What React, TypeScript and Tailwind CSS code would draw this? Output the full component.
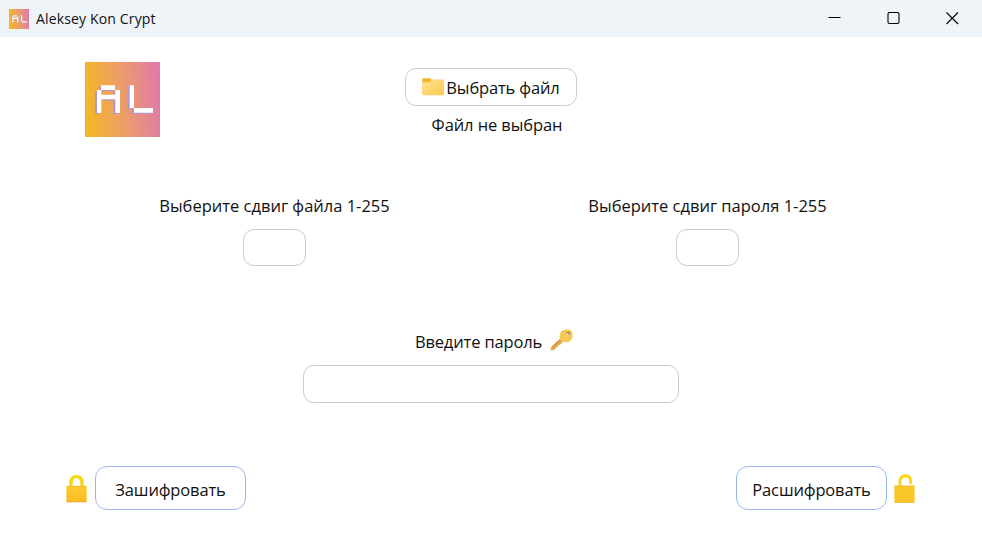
import React from "react";

function Logo({ className }: { className: string }) {
  const letters =
    "M48 70H90V84H105V153H91V112H49V153H36V84H48ZM49 84V98H91V84ZM134 70H147V138H204V152H147V138H134Z";
  return (
    <svg viewBox="0 0 225 225" className={className}>
      <defs>
        <linearGradient id="logoBg" x1="0" y1="0.55" x2="1" y2="0.45">
          <stop offset="0" stopColor="#f5b727" />
          <stop offset="0.12" stopColor="#f2b135" />
          <stop offset="0.55" stopColor="#eb9a70" />
          <stop offset="1" stopColor="#e07ba6" />
        </linearGradient>
      </defs>
      <rect width="225" height="225" fill="url(#logoBg)" />
      <path d={letters} fill="#b295cd" fillRule="evenodd" transform="translate(-6 3)" />
      <path d={letters} fill="#fff" fillRule="evenodd" />
    </svg>
  );
}

function FolderIcon() {
  return (
    <svg viewBox="0 0 66 54" className="h-[18px] w-[22px] shrink-0">
      <defs>
        <linearGradient id="folder" x1="0" y1="0" x2="1" y2="1">
          <stop offset="0" stopColor="#ffe294" />
          <stop offset="1" stopColor="#fccb50" />
        </linearGradient>
      </defs>
      <path d="M1 4Q1 1 4 1H24L29 5H62Q65 5 65 8V50H1Z" fill="#f4b32d" />
      <path d="M1 13H23L29 5H65V49Q65 52 62 52H4Q1 52 1 49Z" fill="url(#folder)" />
    </svg>
  );
}

function KeyIcon() {
  return (
    <svg viewBox="0 0 68 66" className="h-[22px] w-[23px] shrink-0">
      <path d="M31 28L2 55V64H11L14 60L18 59V54L24 53V48L30 47L40 37Z" fill="#e5ac4c" />
      <path d="M32 31L5 57" stroke="#c78235" strokeWidth="3" />
      <path d="M35 5Q45 0 58 2Q66 4 67 12Q68 29 61 35Q52 42 39 38Q29 36 28 25Q28 11 35 5Z" fill="#f7c653" />
      <circle cx="54" cy="13" r="5" fill="#806c49" />
      <circle cx="53" cy="15" r="3" fill="#fff" />
    </svg>
  );
}

function LockIcon({ open }: { open?: boolean }) {
  return (
    <svg viewBox="0 0 63 87" className="h-[29px] w-[21px] shrink-0">
      <defs>
        <linearGradient id="lockBody" x1="0" y1="0" x2="0" y2="1">
          <stop offset="0" stopColor="#fdcd32" />
          <stop offset="0.9" stopColor="#fcbd23" />
          <stop offset="1" stopColor="#ed9b24" />
        </linearGradient>
      </defs>
      {open ? (
        <path d="M18 38V24Q18 5 34 5Q50 5 50 22V30" fill="none" stroke="#f8d817" strokeWidth="9" />
      ) : (
        <path d="M15 40V27Q15 8 31 8Q48 8 48 27V40" fill="none" stroke="#f7d514" strokeWidth="10" />
      )}
      <rect
        x="1"
        y={open ? 35 : 36}
        width="61"
        height={open ? 51 : 49}
        rx="2"
        fill={open ? "#fac72a" : "url(#lockBody)"}
      />
      <path d={open ? "M2 36H61M2 85H61" : "M2 37H61"} stroke="#f4b02a" strokeWidth="2" />
    </svg>
  );
}

function ShiftField({ label, className }: { label: string; className: string }) {
  return (
    <label className={`flex flex-col items-center ${className}`}>
      <span className="h-6 leading-6">{label}</span>
      <input className="mt-[11px] h-[37px] w-[63px] rounded-[11px] border border-[#cbcbcb] bg-white text-center outline-none" />
    </label>
  );
}

export default function App() {
  return (
    <div className="flex h-[553px] w-[982px] flex-col overflow-hidden bg-white font-['Open_Sans','Noto_Sans',sans-serif] text-[16.5px] whitespace-nowrap text-[#111]">
      <header className="flex h-[37px] shrink-0 items-center bg-[#eff4f9] pl-[9px]">
        <Logo className="size-5" />
        <h1 className="ml-[7px] text-sm tracking-[0.15px]">Aleksey Kon Crypt</h1>
        <div className="ml-auto flex items-center gap-[46px] pr-[23px] text-black">
          <svg viewBox="0 0 13 13" className="size-[13px]">
            <path d="M0.5 5.5H12.5" stroke="currentColor" />
          </svg>
          <svg viewBox="0 0 13 13" className="size-[13px]">
            <rect x="1" y="0.5" width="11" height="11" rx="1.5" fill="none" stroke="currentColor" strokeWidth="1.1" />
          </svg>
          <svg viewBox="0 0 13 13" className="size-[13px]">
            <path d="M0.5 0.5L12 12M12 0.5L0.5 12" stroke="currentColor" strokeWidth="1.1" />
          </svg>
        </div>
      </header>
      <main className="flex flex-1 flex-col">
        <section className="flex h-[157px] items-start pt-[25px] pl-[85px]">
          <Logo className="size-[75px]" />
          <div className="mt-[6px] ml-[245px] flex w-[172px] flex-col items-center">
            <button className="flex h-[38px] w-[172px] items-center justify-center rounded-[11px] border border-[#cbcbcb] bg-white pb-px">
              <FolderIcon />
              <span className="mt-[3px] ml-[2px] tracking-[-0.15px]">Выбрать файл</span>
            </button>
            <span className="mt-[7px] ml-[12px] h-6 leading-6 tracking-[-0.1px]">Файл не выбран</span>
          </div>
        </section>
        <section className="flex h-[134px] gap-[194px] pl-[159px]">
          <ShiftField label="Выберите сдвиг файла 1-255" className="w-[231px]" />
          <ShiftField label="Выберите сдвиг пароля 1-255" className="w-[247px]" />
        </section>
        <section className="flex h-[138px] flex-col items-center">
          <label htmlFor="password" className="ml-1.5 flex h-6 items-center gap-2">
            <span className="mt-[5px] tracking-[-0.15px]">Введите пароль</span>
            <KeyIcon />
          </label>
          <input id="password" className="mt-[13px] h-[38px] w-[376px] rounded-[11px] border border-[#cbcbcb] bg-white px-3 outline-none" />
        </section>
        <section className="flex h-[44px] items-center justify-between pr-[67px] pl-[66px]">
          <div className="flex items-center gap-[8px]">
            <LockIcon />
            <button className="h-[44px] w-[151px] rounded-[12px] border border-[#9bb8ea] bg-white pt-[4px] tracking-[-0.15px]">Зашифровать</button>
          </div>
          <div className="flex items-center gap-[7px]">
            <button className="h-[44px] w-[151px] rounded-[12px] border border-[#9bb8ea] bg-white pt-[4px] tracking-[-0.15px]">Расшифровать</button>
            <LockIcon open />
          </div>
        </section>
      </main>
    </div>
  );
}
